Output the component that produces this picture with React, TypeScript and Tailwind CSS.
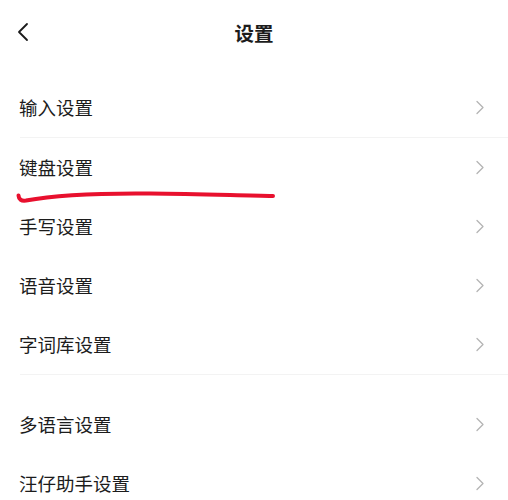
import React from 'react';

type Row = { label: string; divider?: boolean; gapAfter?: boolean };

const rows: Row[] = [
  { label: '输入设置', divider: true },
  { label: '键盘设置' },
  { label: '手写设置' },
  { label: '语音设置' },
  { label: '字词库设置', divider: true, gapAfter: true },
  { label: '多语言设置' },
  { label: '汪仔助手设置' },
];

function Chevron() {
  return (
    <svg width="10" height="15" viewBox="0 0 10 15" fill="none" className="shrink-0">
      <path d="M2 1.5 L8 7.5 L2 13.5" stroke="#b4b4b4" strokeWidth="1.3" strokeLinecap="round" strokeLinejoin="round" />
    </svg>
  );
}

export default function App() {
  return (
    <div
      className="relative w-[508px] h-[500px] overflow-hidden bg-white text-[#1c1c1c]"
      style={{ fontFamily: '"Noto Sans CJK SC", "Noto Sans", sans-serif' }}
    >
      {/* 顶部栏 */}
      <div className="relative flex items-center justify-center h-[66px]">
        <button className="absolute left-[17px] top-[22px]">
          <svg width="12" height="20" viewBox="0 0 12 20" fill="none">
            <path d="M10 2 L2 10 L10 18" stroke="#1a1a1a" strokeWidth="1.8" strokeLinecap="round" strokeLinejoin="round" />
          </svg>
        </button>
        <h1 className="text-[19.5px] font-bold">设置</h1>
      </div>

      {/* 设置列表 */}
      <div className="mt-[12px]">
        {rows.map((r) => (
          <div key={r.label} className={r.gapAfter ? 'mb-[20px]' : ''}>
            <div className="flex items-center justify-between h-[59px] pl-[19px] pr-[23px]">
              <span className="text-[18.5px] leading-none">{r.label}</span>
              <Chevron />
            </div>
            {r.divider && <div className="ml-[20px] h-px bg-[#f3f3f3]" />}
          </div>
        ))}
      </div>

      {/* 红色手写标注 */}
      <svg
        className="absolute left-0 top-0 pointer-events-none"
        width="508"
        height="500"
        viewBox="0 0 508 500"
      >
        <path
          d="M18.5 195.5 Q19 201.5 26 200.5 C55 195 95 193 150 193.5 C200 194 240 195.5 273 196"
          stroke="#e8102e"
          strokeWidth="4"
          fill="none"
          strokeLinecap="round"
        />
      </svg>
    </div>
  );
}
